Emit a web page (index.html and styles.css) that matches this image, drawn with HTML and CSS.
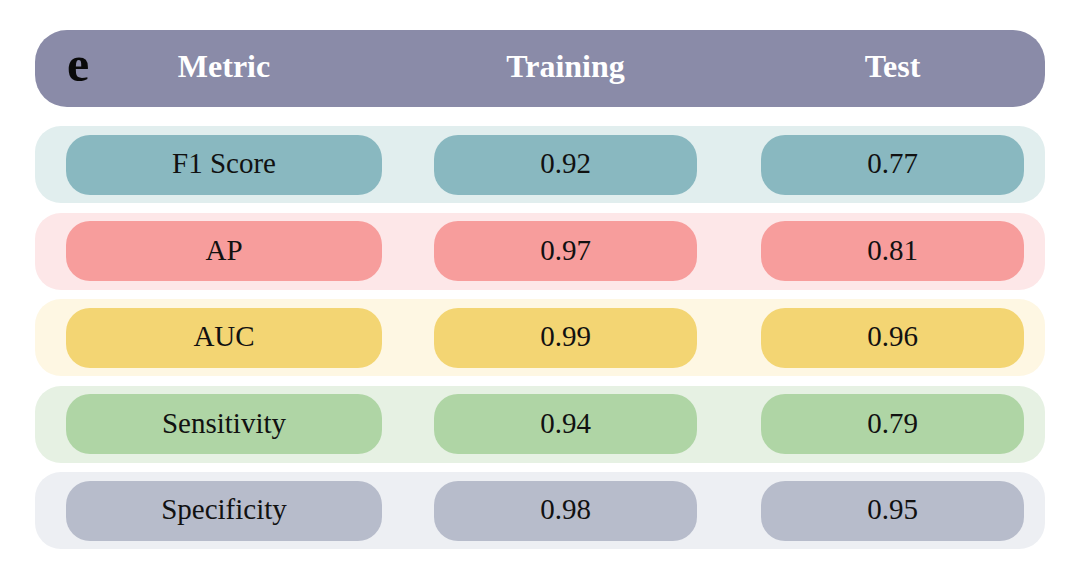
FILE: index.html
```html
<!DOCTYPE html>
<html lang="en">
<head>
<meta charset="utf-8">
<title>Metrics</title>
<link rel="stylesheet" href="styles.css">
</head>
<body>
<main class="panel">
  <div class="header">
    <span class="panel-label">e</span>
    <div class="hcell">Metric</div>
    <div class="hcell">Training</div>
    <div class="hcell">Test</div>
  </div>
  <div class="rows">
    <div class="row teal">
      <div class="pill">F1 Score</div>
      <div class="pill">0.92</div>
      <div class="pill">0.77</div>
    </div>
    <div class="row red">
      <div class="pill">AP</div>
      <div class="pill">0.97</div>
      <div class="pill">0.81</div>
    </div>
    <div class="row yellow">
      <div class="pill">AUC</div>
      <div class="pill">0.99</div>
      <div class="pill">0.96</div>
    </div>
    <div class="row green">
      <div class="pill">Sensitivity</div>
      <div class="pill">0.94</div>
      <div class="pill">0.79</div>
    </div>
    <div class="row grey">
      <div class="pill">Specificity</div>
      <div class="pill">0.98</div>
      <div class="pill">0.95</div>
    </div>
  </div>
</main>
</body>
</html>
```
FILE: styles.css
```css
html, body {
  margin: 0;
  padding: 0;
  background: #ffffff;
}

body {
  font-family: "Liberation Serif", "Times New Roman", serif;
  color: #111111;
}

.panel {
  width: 1010px;
  padding: 30px 0 0 35px;
}

.header,
.row {
  display: grid;
  grid-template-columns: 316px 52px 263px 64px 263px;
  padding: 0 21px 0 31px;
  align-items: center;
}

.header > .hcell:nth-of-type(1),
.row > .pill:nth-child(1) { grid-column: 1; }
.header > .hcell:nth-of-type(2),
.row > .pill:nth-child(2) { grid-column: 3; }
.header > .hcell:nth-of-type(3),
.row > .pill:nth-child(3) { grid-column: 5; }

.header {
  position: relative;
  height: 77px;
  border-radius: 32px;
  background: #8a8ba8;
}

.panel-label {
  position: absolute;
  left: 32px;
  top: 9px;
  font-size: 50px;
  font-weight: bold;
  line-height: 50px;
  color: #0a0a0a;
}

.hcell {
  text-align: center;
  font-size: 32px;
  font-weight: bold;
  color: #ffffff;
  line-height: 1;
  margin-top: -6px;
}

.rows {
  display: flex;
  flex-direction: column;
  gap: 9.5px;
  margin-top: 19px;
}

.row {
  height: 77px;
  border-radius: 26px;
}

.pill {
  height: 60px;
  border-radius: 24px;
  display: flex;
  align-items: center;
  justify-content: center;
  font-size: 29px;
  line-height: 1;
  padding-bottom: 2px;
  box-sizing: border-box;
}

.teal { background: #e1eeee; }
.teal .pill { background: #89b8c0; }

.red { background: #fde7e8; }
.red .pill { background: #f79d9c; }

.yellow { background: #fef7e3; }
.yellow .pill { background: #f3d573; }

.green { background: #e6f1e3; }
.green .pill { background: #afd5a5; }

.grey { background: #edeff3; }
.grey .pill { background: #b7bccb; }
```
